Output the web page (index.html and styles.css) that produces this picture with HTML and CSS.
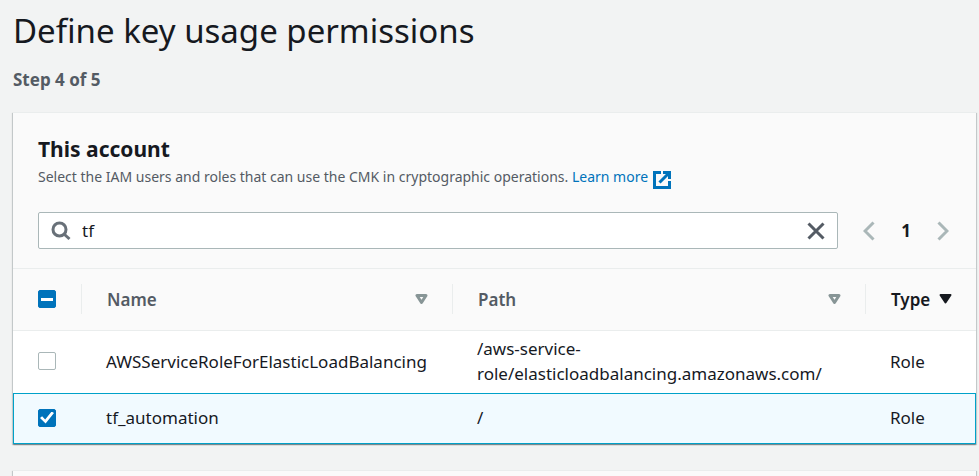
FILE: index.html
```html
<!DOCTYPE html>
<html lang="en">
<head>
<meta charset="utf-8">
<title>Define key usage permissions</title>
<link rel="stylesheet" href="styles.css">
</head>
<body>
<main class="page">
  <h1 class="title">Define key usage permissions</h1>
  <p class="step">Step 4 of 5</p>

  <section class="card">
    <header class="card-header">
      <h2 class="card-title">This account</h2>
      <p class="description">Select the IAM users and roles that can use the CMK in cryptographic operations.
        <a class="link" href="#">Learn more<svg class="external" viewBox="0 0 18 18" aria-hidden="true"><path d="M8 1.500H1.500v15h15V10M10 1.500H16.500V8M16 2 6.500 11.500"/></svg></a></p>
      <div class="toolbar">
        <div class="search">
          <svg class="search-icon" viewBox="0 0 20 20" aria-hidden="true"><circle cx="8.500" cy="8.500" r="6.500"/><path d="m13 13 5.500 5"/></svg>
          <input class="search-input" type="text" value="tf" aria-label="Find users and roles">
          <button class="icon-button" type="button" aria-label="Clear"><svg class="clear-icon" viewBox="0 0 18 18" aria-hidden="true"><path d="m1.500 1.500 15 15M16.500 1.500l-15 15"/></svg></button>
        </div>
        <nav class="pagination" aria-label="Pages">
          <button class="icon-button" type="button" aria-label="Previous page"><svg class="chevron" viewBox="0 0 12 20" aria-hidden="true"><path d="M10.500 1.500 2 10l8.500 8.500"/></svg></button>
          <button class="page-number" type="button">1</button>
          <button class="icon-button" type="button" aria-label="Next page"><svg class="chevron" viewBox="0 0 12 20" aria-hidden="true"><path d="M1.500 1.500 10 10l-8.500 8.500"/></svg></button>
        </nav>
      </div>
    </header>

    <table class="table">
      <colgroup><col class="col-select"><col class="col-name"><col class="col-path"><col class="col-type"></colgroup>
      <thead>
        <tr>
          <th scope="col"><div class="head head-select"><input class="check mixed" type="checkbox" aria-label="Select all"></div></th>
          <th scope="col"><div class="head"><span>Name</span><svg class="sort" viewBox="0 0 13 12" aria-hidden="true"><path d="M2 2.500h9L6.500 9.500Z"/></svg></div></th>
          <th scope="col"><div class="head"><span>Path</span><svg class="sort" viewBox="0 0 13 12" aria-hidden="true"><path d="M2 2.500h9L6.500 9.500Z"/></svg></div></th>
          <th scope="col" aria-sort="descending"><div class="head head-sorted"><span>Type</span><svg class="sort" viewBox="0 0 13 12" aria-hidden="true"><path d="M1.500 2h10L6.500 9.500Z"/></svg></div></th>
        </tr>
      </thead>
      <tbody>
        <tr>
          <td><input class="check" type="checkbox" aria-label="Select AWSServiceRoleForElasticLoadBalancing"></td>
          <td>AWSServiceRoleForElasticLoadBalancing</td>
          <td>/aws-service-<wbr>role/elasticloadbalancing.amazonaws.com/</td>
          <td>Role</td>
        </tr>
        <tr class="selected">
          <td><input class="check" type="checkbox" checked aria-label="Select tf_automation"></td>
          <td>tf_automation</td>
          <td>/</td>
          <td>Role</td>
        </tr>
      </tbody>
    </table>
  </section>

  <section class="card card-empty"></section>
</main>
</body>
</html>
```
FILE: styles.css
```css
* { box-sizing: border-box; }

body {
  margin: 0;
  background: #f2f3f3;
  color: #16191f;
  font: 17px/25px "Noto Sans", "Open Sans", sans-serif;
}

.page { padding: 8px 3px 0 13px; }

.title { margin: 0; font-size: 33px; line-height: 46px; font-weight: 400; }

.step { margin: 13px 0 20px; color: #545b64; font-weight: 700; }

.card {
  margin-bottom: 26px;
  background: #fff;
  border-top: 1px solid #eaeded;
  box-shadow: 0 1px 1px rgba(0, 28, 36, 0.3), 1px 1px 1px rgba(0, 28, 36, 0.15), -1px 1px 1px rgba(0, 28, 36, 0.15);
}

.card-empty { min-height: 6px; margin-bottom: 0; background: #fafafa; }

.card-header {
  padding: 24px 25px 19px;
  background: #fafafa;
  border-bottom: 1px solid #eaeded;
}

.card-title { margin: 0; font-size: 21px; line-height: 25px; font-weight: 700; }

.description { height: 30px; margin: 0 0 20px; color: #545b64; font-size: 14px; line-height: 30px; }

.link { color: #0073bb; text-decoration: none; }

.external {
  width: 18px;
  height: 18px;
  margin-left: 5px;
  vertical-align: -7px;
  fill: none;
  stroke: #0073bb;
  stroke-width: 3;
}

.toolbar { display: flex; align-items: center; gap: 25px; }

.search {
  flex: 1;
  display: flex;
  align-items: center;
  height: 37px;
  padding: 0 12px;
  background: #fff;
  border: 1px solid #aab7b8;
  border-radius: 2px;
}

.search-icon { width: 20px; height: 20px; fill: none; stroke: #687078; stroke-width: 3; }

.search-input {
  flex: 1;
  min-width: 0;
  margin-left: 11px;
  padding: 0;
  border: 0;
  outline: 0;
  background: none;
  color: inherit;
  font: inherit;
}

.icon-button, .page-number {
  display: flex;
  padding: 0;
  border: 0;
  background: none;
  color: inherit;
  font: inherit;
}

.page-number { font-weight: 700; }

.clear-icon { width: 18px; height: 18px; fill: none; stroke: #545b64; stroke-width: 3; }

.pagination { display: flex; align-items: center; gap: 26px; padding-right: 2px; }

.chevron { width: 12px; height: 20px; fill: none; stroke: #aab7b8; stroke-width: 3; }

.table { width: 100%; table-layout: fixed; border-collapse: separate; border-spacing: 0; }

.col-select { width: 69px; }
.col-name { width: 371px; }
.col-type { width: 110px; }

th {
  height: 62px;
  padding: 0 0 1px;
  background: #fafafa;
  border-bottom: 1px solid #eaeded;
  color: #545b64;
  font-weight: 600;
  text-align: left;
}

.head {
  display: flex;
  align-items: center;
  justify-content: space-between;
  height: 30px;
  padding: 0 24px 0 25px;
  border-right: 1px solid #eaeded;
}

.head-sorted { justify-content: flex-start; gap: 9px; padding-right: 0; border-right: 0; color: #16191f; }

.sort { width: 13px; height: 12px; fill: none; stroke: #879596; stroke-width: 3; stroke-linejoin: round; }

.head-sorted .sort { fill: #16191f; stroke: #16191f; stroke-width: 2; }

td { height: 62px; padding: 4px 0 6px 24px; vertical-align: middle; }

td:first-child { padding-left: 25px; }

.selected td {
  height: 51px;
  background: #f1faff;
  border-top: 1px solid #00a1c9;
  border-bottom: 1px solid #00a1c9;
}

.selected td:first-child { padding-left: 24px; border-left: 1px solid #00a1c9; }
.selected td:last-child { border-right: 1px solid #00a1c9; }

.check {
  display: block;
  width: 18px;
  height: 18px;
  margin: 0;
  appearance: none;
  background: #fff;
  border: 1px solid #aab7b8;
  border-radius: 2px;
}

.check:checked, .mixed { display: grid; place-items: center; background: #0073bb; border-color: #0073bb; }

.mixed::before { content: ""; width: 12px; height: 3px; background: #fff; }

.check:checked::before {
  content: "";
  width: 14px;
  height: 12px;
  background: #fff;
  clip-path: polygon(0 54%, 15% 40%, 37% 66%, 83% 0, 100% 12%, 40% 100%);
}
```
